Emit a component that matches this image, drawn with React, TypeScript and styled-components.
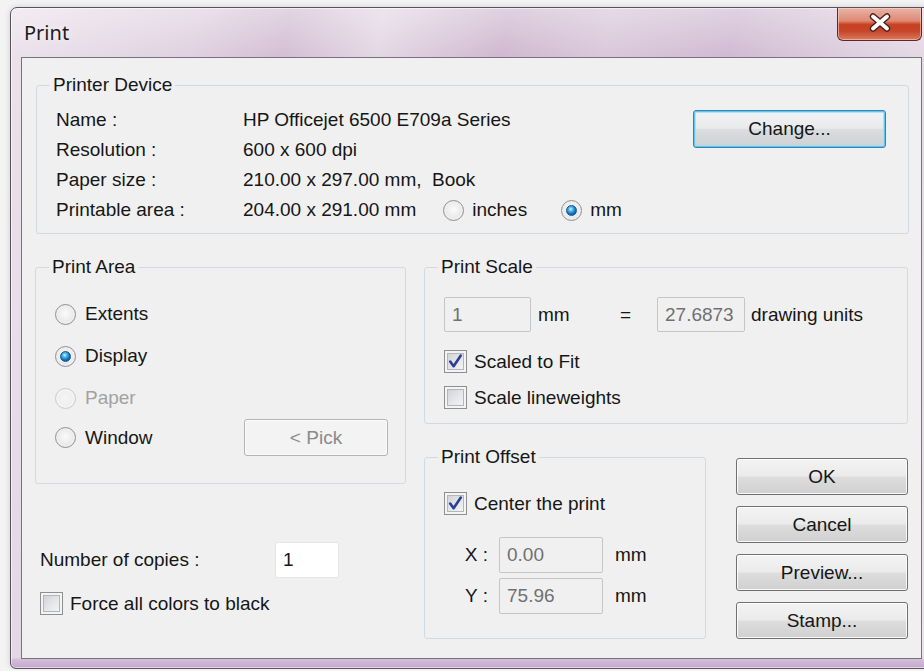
import React from "react";
import styled, { createGlobalStyle, css } from "styled-components";

const GlobalStyle = createGlobalStyle`
  html, body { margin: 0; padding: 0; }
  body {
    background: #f3f3f3;
    overflow: hidden;
    font-family: "Liberation Sans", Arial, sans-serif;
    font-size: 19px;
    color: #161616;
  }
  * { box-sizing: border-box; }
`;

/* ---------- window chrome ---------- */

const Window = styled.div`
  margin: 7px 0 0 10px;
  width: 923px;
  height: 662px;
  border: 1px solid #57525c;
  border-radius: 7px 7px 6px 6px;
  padding: 0 10px 9px;
  display: flex;
  flex-direction: column;
  background:
    linear-gradient(to top, #c4a6cd 0px, #d5bfdb 9px, rgba(213, 191, 219, 0) 10px),
    linear-gradient(180deg, rgba(255, 255, 255, 0.35) 0px, rgba(255, 255, 255, 0) 50px),
    linear-gradient(
      100deg,
      #ebe2eb 0%,
      #e0d1e0 18%,
      #d3bed4 27%,
      #e4d7e4 36%,
      #cfb8d0 48%,
      #d9c7da 58%,
      #d0bad2 70%,
      #e2d5e3 86%,
      #ebe2eb 100%
    );
  box-shadow: inset 0 0 0 1px rgba(255, 255, 255, 0.55), 0 0 6px rgba(0, 0, 0, 0.15);
`;

const TitleBar = styled.div`
  height: 49px;
  flex: none;
  display: flex;
  justify-content: space-between;
  align-items: flex-start;
`;

const Title = styled.div`
  padding: 12px 0 0 3px;
  font-family: "Noto Sans", "Open Sans", sans-serif;
  font-size: 20px;
  line-height: 26px;
  color: #1b1b1b;
  text-shadow: 0 0 8px rgba(255, 255, 255, 0.9);
`;

const CloseButton = styled.div`
  width: 85px;
  height: 33px;
  border: 1px solid #5a2a26;
  border-top: none;
  border-radius: 0 0 6px 6px;
  display: flex;
  align-items: center;
  justify-content: center;
  padding-bottom: 3px;
  background: linear-gradient(
    180deg,
    #e9b3a6 0%,
    #dd8a74 40%,
    #c8401f 52%,
    #c6452a 72%,
    #db7a5e 100%
  );
  box-shadow: inset 0 0 0 1px rgba(255, 220, 210, 0.55);
`;

const Client = styled.div`
  width: 901px;
  height: 602px;
  flex: none;
  border: 1px solid #77727c;
  background: #f0f0f0;
  padding: 17px 13px 0 13px;
  display: flex;
  flex-direction: column;
`;

/* ---------- group boxes ---------- */

const Group = styled.fieldset<{ $width: number; $pad: string }>`
  margin: 0;
  width: ${(p) => p.$width}px;
  padding: ${(p) => p.$pad};
  border: 1px solid #d3dadf;
  border-radius: 3px;
  min-width: 0;
`;

const Legend = styled.legend`
  font-size: 19px;
  line-height: 20px;
  padding: 0 3px;
  margin-left: -6px;
  color: #161616;
`;

/* ---------- printer device ---------- */

const PrinterBody = styled.div`
  display: flex;
  justify-content: space-between;
  align-items: flex-start;
`;

const InfoGrid = styled.div`
  display: grid;
  grid-template-columns: 187px auto;
  grid-auto-rows: 30px;
  align-items: center;
`;

const InlineRow = styled.div`
  display: flex;
  align-items: center;
`;

const UnitChoice = styled.label<{ $gap: number }>`
  display: flex;
  align-items: center;
  gap: 8px;
  margin-left: ${(p) => p.$gap}px;
`;

/* ---------- controls ---------- */

const Button = styled.button<{ $default?: boolean; $w: number; $h: number }>`
  font: inherit;
  font-size: 19px;
  color: #161616;
  width: ${(p) => p.$w}px;
  height: ${(p) => p.$h}px;
  padding: 0;
  border: 1px solid #707070;
  border-radius: 3px;
  background: linear-gradient(180deg, #f3f3f3 0%, #ebebeb 48%, #dddddd 52%, #d0d0d0 100%);
  box-shadow: inset 0 0 0 1px rgba(255, 255, 255, 0.85);
  ${(p) =>
    p.$default &&
    css`
      border-color: #3c7fb1;
      box-shadow: inset 0 0 0 1px #5cc8f2, inset 0 0 0 2px rgba(160, 222, 248, 0.8);
      background: linear-gradient(180deg, #f1f3f4 0%, #e8ebed 48%, #dadcde 52%, #cfd2d4 100%);
    `}
  &:disabled {
    border-color: #b1b5b8;
    background: #f3f3f3;
    color: #8a8a8a;
    box-shadow: inset 0 0 0 1px #fbfbfb;
  }
`;

const Radio = styled.span<{ $checked?: boolean; $disabled?: boolean }>`
  position: relative;
  flex: none;
  width: 21px;
  height: 21px;
  border-radius: 50%;
  border: 1px solid ${(p) => (p.$disabled ? "#cacaca" : "#8f9194")};
  background: radial-gradient(
    circle at 50% 45%,
    ${(p) => (p.$disabled ? "#f6f6f6 0%, #eeeeee 55%, #e4e4e4 100%" : "#fbfbfb 0%, #ececec 50%, #cfd0d2 100%")}
  );
  box-shadow: inset 0 0 0 2px ${(p) => (p.$disabled ? "#f4f4f4" : "#eeeeee")};
  ${(p) =>
    p.$checked &&
    css`
      &::after {
        content: "";
        position: absolute;
        inset: 4px;
        border-radius: 50%;
        border: 1px solid #1d5286;
        background: radial-gradient(
          circle at 42% 35%,
          #d4f3ff 0%,
          #49b5ee 28%,
          #0f6cbc 62%,
          #0c4b8a 100%
        );
      }
    `}
`;

const Box = styled.span`
  flex: none;
  width: 23px;
  height: 23px;
  border: 1px solid #8e8f8f;
  display: flex;
  align-items: center;
  justify-content: center;
  background: linear-gradient(135deg, #c9ccd1 0%, #e4e5e8 50%, #f9f9f9 100%);
  box-shadow: inset 0 0 0 2px #f4f4f4, inset 0 0 0 3px #b2b6bb;
`;

const CheckRow = styled.label<{ $mt?: number }>`
  display: flex;
  align-items: center;
  gap: 7px;
  height: 23px;
  margin-top: ${(p) => p.$mt ?? 0}px;
`;

const Field = styled.div<{ $w: number; $h: number; $enabled?: boolean }>`
  width: ${(p) => p.$w}px;
  height: ${(p) => p.$h}px;
  flex: none;
  display: flex;
  align-items: center;
  padding-left: 7px;
  border: 1px solid ${(p) => (p.$enabled ? "#e4e6e8" : "#c4c7ca")};
  border-radius: 2px;
  background: ${(p) => (p.$enabled ? "#ffffff" : "#f0f0f0")};
  color: ${(p) => (p.$enabled ? "#161616" : "#707070")};
`;

const Check = () => (
  <svg width="17" height="17" viewBox="0 0 17 17">
    <path
      d="M3.2 8.6 L6.6 13.2 L13.8 2.6"
      fill="none"
      stroke="#2a3f93"
      strokeWidth="2.6"
      strokeLinejoin="round"
      strokeLinecap="round"
    />
  </svg>
);

const CheckBox: React.FC<{ checked?: boolean; label: string; mt?: number }> = ({ checked, label, mt }) => (
  <CheckRow $mt={mt}>
    <Box>{checked && <Check />}</Box>
    <span>{label}</span>
  </CheckRow>
);

/* ---------- lower area ---------- */

const Lower = styled.div`
  display: flex;
  gap: 18px;
  margin-top: 23px;
`;

const Column = styled.div<{ $w: number }>`
  width: ${(p) => p.$w}px;
  display: flex;
  flex-direction: column;
`;

const RadioRow = styled.label<{ $h: number; $disabled?: boolean }>`
  display: flex;
  align-items: center;
  gap: 9px;
  height: ${(p) => p.$h}px;
  color: ${(p) => (p.$disabled ? "#a2a2a2" : "inherit")};
`;

const PushRight = styled.div`
  margin-left: auto;
`;

const CopiesRow = styled.div`
  display: flex;
  align-items: center;
  margin-top: 58px;
  padding-left: 5px;
`;

const CopiesLabel = styled.span`
  width: 235px;
`;

const Indented = styled.div`
  padding-left: 5px;
  margin-top: 14px;
`;

const ScaleRow = styled.div`
  display: flex;
  align-items: center;
  height: 35px;
  margin-bottom: 18px;
`;

const Unit = styled.span<{ $w?: number; $ml?: number }>`
  width: ${(p) => (p.$w ? `${p.$w}px` : "auto")};
  margin-left: ${(p) => p.$ml ?? 0}px;
  flex: none;
`;

const OffsetRow = styled.div`
  display: flex;
  gap: 30px;
  margin-top: 23px;
`;

const AxisRow = styled.div<{ $mt: number }>`
  display: flex;
  align-items: center;
  margin-top: ${(p) => p.$mt}px;
`;

const AxisLabel = styled.span`
  width: 55px;
  padding-right: 11px;
  text-align: right;
`;

const ButtonStack = styled.div`
  display: flex;
  flex-direction: column;
  gap: 11px;
  margin-top: 11px;
`;

export default function App() {
  return (
    <>
      <GlobalStyle />
      <Window>
        <TitleBar>
          <Title>Print</Title>
          <CloseButton>
            <svg width="24" height="19" viewBox="0 0 24 19">
              <path d="M5 3.5 L19 15.5 M19 3.5 L5 15.5" stroke="#4a1f1a" strokeWidth="6.5" strokeLinecap="round" />
              <path d="M5 3.5 L19 15.5 M19 3.5 L5 15.5" stroke="#ffffff" strokeWidth="3.8" strokeLinecap="round" />
            </svg>
          </CloseButton>
        </TitleBar>

        <Client>
          <Group $width={873} $pad="10px 22px 8px 19px" style={{ marginLeft: 1 }}>
            <Legend>Printer Device</Legend>
            <PrinterBody>
              <InfoGrid>
                <span>Name :</span>
                <span>HP Officejet 6500 E709a Series</span>
                <span>Resolution :</span>
                <span>600 x 600 dpi</span>
                <span>Paper size :</span>
                <span>210.00 x 297.00 mm,&nbsp; Book</span>
                <span>Printable area :</span>
                <InlineRow>
                  <span>204.00 x 291.00 mm</span>
                  <UnitChoice $gap={27}>
                    <Radio />
                    <span>inches</span>
                  </UnitChoice>
                  <UnitChoice $gap={34}>
                    <Radio $checked />
                    <span>mm</span>
                  </UnitChoice>
                </InlineRow>
              </InfoGrid>
              <Button $default $w={193} $h={38} style={{ marginTop: 5 }}>
                Change...
              </Button>
            </PrinterBody>
          </Group>

          <Lower>
            <Column $w={371}>
              <Group $width={371} $pad="16px 17px 27px 19px">
                <Legend>Print Area</Legend>
                <RadioRow $h={42}>
                  <Radio />
                  <span>Extents</span>
                </RadioRow>
                <RadioRow $h={42}>
                  <Radio $checked />
                  <span>Display</span>
                </RadioRow>
                <RadioRow $h={42} $disabled>
                  <Radio $disabled />
                  <span>Paper</span>
                </RadioRow>
                <RadioRow $h={37}>
                  <Radio />
                  <span>Window</span>
                  <PushRight>
                    <Button $w={144} $h={37} disabled>
                      &lt; Pick
                    </Button>
                  </PushRight>
                </RadioRow>
              </Group>

              <CopiesRow>
                <CopiesLabel>Number of copies :</CopiesLabel>
                <Field $w={64} $h={36} $enabled>
                  1
                </Field>
              </CopiesRow>
              <Indented>
                <CheckBox label="Force all colors to black" />
              </Indented>
            </Column>

            <Column $w={484}>
              <Group $width={484} $pad="20px 19px 14px 19px">
                <Legend>Print Scale</Legend>
                <ScaleRow>
                  <Field $w={87} $h={35}>1</Field>
                  <Unit $w={82} $ml={7}>mm</Unit>
                  <Unit $w={37}>=</Unit>
                  <Field $w={88} $h={35}>27.6873</Field>
                  <Unit $ml={6}>drawing units</Unit>
                </ScaleRow>
                <CheckBox checked label="Scaled to Fit" />
                <CheckBox label="Scale lineweights" mt={13} />
              </Group>

              <OffsetRow>
                <Group $width={282} $pad="25px 19px 21px 19px">
                  <Legend>Print Offset</Legend>
                  <CheckBox checked label="Center the print" />
                  <AxisRow $mt={22}>
                    <AxisLabel>X :</AxisLabel>
                    <Field $w={104} $h={36}>0.00</Field>
                    <Unit $ml={12}>mm</Unit>
                  </AxisRow>
                  <AxisRow $mt={5}>
                    <AxisLabel>Y :</AxisLabel>
                    <Field $w={104} $h={36}>75.96</Field>
                    <Unit $ml={12}>mm</Unit>
                  </AxisRow>
                </Group>

                <ButtonStack>
                  <Button $w={172} $h={37}>OK</Button>
                  <Button $w={172} $h={37}>Cancel</Button>
                  <Button $w={172} $h={37}>Preview...</Button>
                  <Button $w={172} $h={37}>Stamp...</Button>
                </ButtonStack>
              </OffsetRow>
            </Column>
          </Lower>
        </Client>
      </Window>
    </>
  );
}
